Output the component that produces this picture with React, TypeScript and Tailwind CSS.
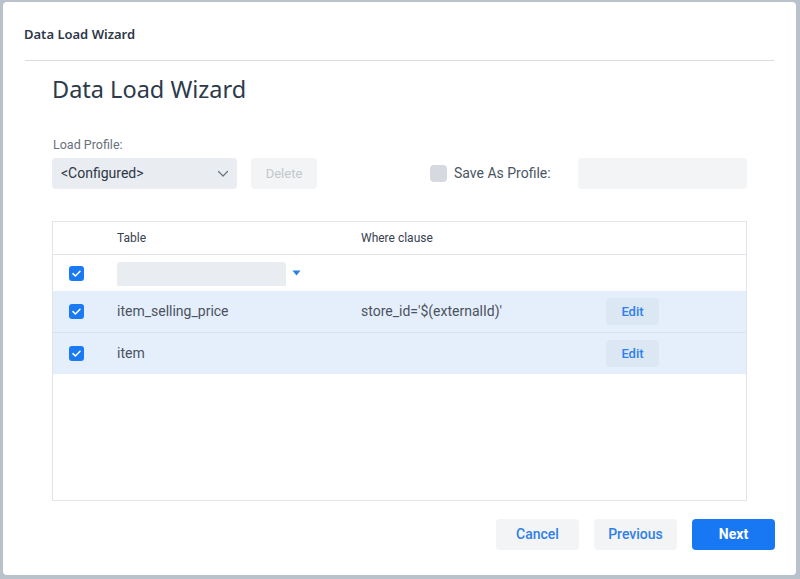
import React from "react";

const Check = ({ size = 15 }: { size?: number }) => (
  <div
    className="flex items-center justify-center rounded-[3px] bg-[#1a7af3]"
    style={{ width: size, height: size }}
  >
    <svg width="9" height="7" viewBox="0 0 9 7" fill="none">
      <path d="M1 3.6L3.4 6L8 1.2" stroke="white" strokeWidth="1.5" strokeLinecap="round" strokeLinejoin="round" />
    </svg>
  </div>
);

export default function App() {
  return (
    <div className="w-[800px] h-[579px] bg-[#b9c1ca] pt-[2px] pl-[3px] overflow-hidden" style={{ fontFamily: "Roboto, 'Liberation Sans', sans-serif" }}>
      <div className="w-[793px] h-[573px] bg-white rounded-[4px] flex flex-col">
        <div className="h-[58px] pt-[22px] pl-[21px]">
          <div className="text-[13px] leading-[20px] font-semibold text-[#2d3748]" style={{ fontFamily: "'Noto Sans', sans-serif" }}>
            Data Load Wizard
          </div>
        </div>
        <div className="mx-[22px] h-px bg-[#dcdcdc]" />
        <div className="px-[49px] flex flex-col">
          <div className="mt-[12px] text-[23.5px] leading-[32px] text-[#2c3a4b]" style={{ fontFamily: "'Noto Sans', sans-serif" }}>
            Data Load Wizard
          </div>
          <div className="mt-[32px] pl-[1px] text-[12.5px] leading-[16px] text-[#68717d]">Load Profile:</div>
          <div className="mt-[5px] flex items-center h-[31px]">
            <div className="w-[185px] h-[31px] rounded-[4px] bg-[#e9ecf0] flex items-center justify-between pl-[9px] pr-[8px]">
              <span className="text-[14px] text-[#2d3748]">&lt;Configured&gt;</span>
              <svg width="12" height="8" viewBox="0 0 12 8" fill="none">
                <path d="M1.5 1.5L6 6L10.5 1.5" stroke="#6b7280" strokeWidth="1.2" strokeLinecap="round" strokeLinejoin="round" />
              </svg>
            </div>
            <div className="ml-[14px] w-[66px] h-[31px] rounded-[4px] bg-[#f3f4f6] flex items-center justify-center text-[13px] text-[#c3c7cd]">
              Delete
            </div>
            <div className="ml-[113px] w-[17px] h-[17px] rounded-[4px] bg-[#d6dae0]" />
            <span className="ml-[7px] text-[14px] text-[#4a5563]">Save As Profile:</span>
            <div className="ml-auto w-[169px] h-[31px] rounded-[4px] bg-[#f3f4f6]" />
          </div>
          <div className="mt-[32px] h-[280px] border border-[#e1e4e9] flex flex-col">
            <div className="h-[33px] border-b border-[#e1e4e9] flex items-center text-[12px] text-[#374151]">
              <div className="w-[64px]" />
              <div className="w-[244px]">Table</div>
              <div>Where clause</div>
            </div>
            <div className="h-[36px] flex items-center">
              <div className="w-[64px] pl-[16px]">
                <Check />
              </div>
              <div className="w-[169px] h-[24px] rounded-t-[3px] bg-[#e9ecf0] mt-[2px]" />
              <svg className="ml-[6px]" width="9" height="6" viewBox="0 0 9 6">
                <path d="M0.5 0.5H8.5L4.5 5.5Z" fill="#2b7fe8" />
              </svg>
            </div>
            <div className="h-[42px] bg-[#e5effb] flex items-center border-b border-[#d9e3ee]">
              <div className="w-[64px] pl-[16px]">
                <Check />
              </div>
              <div className="w-[244px] text-[14px] text-[#4a5260]">item_selling_price</div>
              <div className="w-[245px] text-[14px] text-[#4a5260]">store_id='$(externalId)'</div>
              <div className="w-[53px] h-[27px] rounded-[4px] bg-[#dce7f4] flex items-center justify-center text-[13px] font-medium text-[#2f80ed]">Edit</div>
            </div>
            <div className="h-[41px] bg-[#e5effb] flex items-center">
              <div className="w-[64px] pl-[16px]">
                <Check />
              </div>
              <div className="w-[244px] text-[14px] text-[#4a5260]">item</div>
              <div className="w-[245px]" />
              <div className="w-[53px] h-[27px] rounded-[4px] bg-[#dce7f4] flex items-center justify-center text-[13px] font-medium text-[#2f80ed]">Edit</div>
            </div>
          </div>
        </div>
        <div className="mt-[18px] pr-[21px] flex justify-end gap-[15px]">
          <div className="w-[83px] h-[31px] rounded-[4px] bg-[#f3f4f6] flex items-center justify-center text-[14px] font-medium text-[#2f7fe6]">Cancel</div>
          <div className="w-[83px] h-[31px] rounded-[4px] bg-[#f3f4f6] flex items-center justify-center text-[14px] font-medium text-[#2f7fe6]">Previous</div>
          <div className="w-[83px] h-[31px] rounded-[4px] bg-[#1877f2] flex items-center justify-center text-[14px] font-bold text-white">Next</div>
        </div>
      </div>
    </div>
  );
}
